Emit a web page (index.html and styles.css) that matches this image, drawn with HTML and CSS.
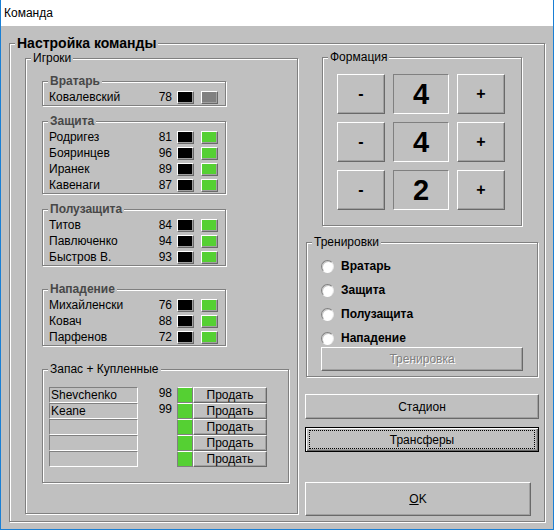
FILE: index.html
```html
<!DOCTYPE html>
<html lang="ru">
<head>
<meta charset="utf-8">
<title>Команда</title>
<link rel="stylesheet" href="styles.css">
</head>
<body>
<div class="window">
  <div class="titlebar">Команда</div>
  <div class="client">
    <div class="gb main">
      <div class="lg"><span class="main-title">Настройка команды</span></div>
      <div class="main-body">

        <div class="gb players">
          <div class="lg"><span>Игроки</span></div>
          <div class="players-body">

            <div class="gb sub">
              <div class="lg"><span class="sub-title">Вратарь</span></div>
              <div class="rows">
                <div class="row"><span class="name">Ковалевский</span><span class="num">78</span><span class="box black"></span><span class="box gray"></span></div>
              </div>
            </div>

            <div class="gb sub sp15">
              <div class="lg"><span class="sub-title">Защита</span></div>
              <div class="rows">
                <div class="row"><span class="name">Родригез</span><span class="num">81</span><span class="box black"></span><span class="box green"></span></div>
                <div class="row"><span class="name">Бояринцев</span><span class="num">96</span><span class="box black"></span><span class="box green"></span></div>
                <div class="row"><span class="name">Иранек</span><span class="num">89</span><span class="box black"></span><span class="box green"></span></div>
                <div class="row"><span class="name">Кавенаги</span><span class="num">87</span><span class="box black"></span><span class="box green"></span></div>
              </div>
            </div>

            <div class="gb sub sp15">
              <div class="lg"><span class="sub-title">Полузащита</span></div>
              <div class="rows">
                <div class="row"><span class="name">Титов</span><span class="num">84</span><span class="box black"></span><span class="box green"></span></div>
                <div class="row"><span class="name">Павлюченко</span><span class="num">94</span><span class="box black"></span><span class="box green"></span></div>
                <div class="row"><span class="name">Быстров В.</span><span class="num">93</span><span class="box black"></span><span class="box green"></span></div>
              </div>
            </div>

            <div class="gb sub sp23">
              <div class="lg"><span class="sub-title">Нападение</span></div>
              <div class="rows">
                <div class="row"><span class="name">Михайленски</span><span class="num">76</span><span class="box black"></span><span class="box green"></span></div>
                <div class="row"><span class="name">Ковач</span><span class="num">88</span><span class="box black"></span><span class="box green"></span></div>
                <div class="row"><span class="name">Парфенов</span><span class="num">72</span><span class="box black"></span><span class="box green"></span></div>
              </div>
            </div>

            <div class="gb reserve sp23">
              <div class="lg"><span>Запас + Купленные</span></div>
              <div class="reserve-body">
                <div class="rrow"><span class="field">Shevchenko</span><span class="rnum">98</span><span class="gcell"></span><span class="btn sell">Продать</span></div>
                <div class="rrow"><span class="field">Keane</span><span class="rnum">99</span><span class="gcell"></span><span class="btn sell">Продать</span></div>
                <div class="rrow"><span class="field"></span><span class="rnum"></span><span class="gcell"></span><span class="btn sell">Продать</span></div>
                <div class="rrow"><span class="field"></span><span class="rnum"></span><span class="gcell"></span><span class="btn sell">Продать</span></div>
                <div class="rrow"><span class="field"></span><span class="rnum"></span><span class="gcell"></span><span class="btn sell">Продать</span></div>
              </div>
            </div>

          </div>
        </div>

        <div class="side">
          <div class="gb formation">
            <div class="lg"><span>Формация</span></div>
            <div class="formation-body">
              <div class="btn fbtn">-</div><div class="display">4</div><div class="btn fbtn">+</div>
              <div class="btn fbtn">-</div><div class="display">4</div><div class="btn fbtn">+</div>
              <div class="btn fbtn">-</div><div class="display">2</div><div class="btn fbtn">+</div>
            </div>
          </div>

          <div class="gb training">
            <div class="lg"><span>Тренировки</span></div>
            <div class="training-body">
              <div class="radio-row"><span class="radio"></span><span class="rlabel">Вратарь</span></div>
              <div class="radio-row"><span class="radio"></span><span class="rlabel">Защита</span></div>
              <div class="radio-row"><span class="radio"></span><span class="rlabel">Полузащита</span></div>
              <div class="radio-row"><span class="radio"></span><span class="rlabel">Нападение</span></div>
              <div class="btn train-btn">Тренировка</div>
            </div>
          </div>

          <div class="btn wide stadium">Стадион</div>
          <div class="btn wide default"><span class="focus">Трансферы</span></div>
          <div class="btn ok"><span><span class="u">O</span>K</span></div>
        </div>

      </div>
    </div>
  </div>
</div>
</body>
</html>
```

FILE: styles.css
```css
* { box-sizing: border-box; }
html, body { margin: 0; padding: 0; }
body {
  width: 554px;
  height: 530px;
  overflow: hidden;
  font-family: "Liberation Sans", Arial, sans-serif;
  font-size: 12px;
  color: #000;
  background: #fff;
}
.window {
  width: 554px;
  height: 530px;
  border: 1px solid #1a7fd4;
  border-top: none;
  display: flex;
  flex-direction: column;
}
.titlebar {
  height: 26px;
  flex: none;
  background: #fff;
  padding-left: 3px;
  display: flex;
  align-items: center;
  font-size: 12px;
}
.client {
  flex: 1;
  background: #c0c0c0;
  padding: 17px 0 0 8px;
}

/* etched group box */
.gb {
  border: 1px solid #808080;
  box-shadow: inset 1px 1px 0 #fff, 1px 1px 0 #fff;
}
.lg {
  height: 0;
  display: flex;
  align-items: center;
  margin-top: -1px;
  margin-bottom: 1px;
  padding-left: 5px;
}
.lg span {
  background: #c0c0c0;
  padding: 0 2px;
  line-height: 14px;
  white-space: nowrap;
}
.lg .main-title {
  font-size: 14px;
  font-weight: bold;
  line-height: 18px;
}
.lg .sub-title {
  font-weight: bold;
  color: #484848;
}

.main {
  width: 536px;
  height: 479px;
}
.main-body {
  display: flex;
  align-items: flex-start;
  padding: 14px 0 0 15px;
}

.players {
  width: 273px;
  height: 456px;
  flex: none;
}
.players-body {
  padding: 22px 0 0 16px;
}
.sub { width: 184px; }
.sp15 { margin-top: 15px; }
.sp23 { margin-top: 23px; }
.rows {
  padding: 7px 7px 0 6px;
}
.row {
  display: flex;
  align-items: center;
  height: 16px;
}
.name { flex: 1; white-space: nowrap; }
.num { margin-right: 5px; }
.box {
  width: 17px;
  height: 13px;
  border: 1px solid;
  border-color: #fff #696969 #696969 #fff;
  box-shadow: inset -1px -1px 0 #a0a0a0;
}
.box + .box { margin-left: 7px; }
.black { background: #000; }
.gray { background: #808080; }
.green { background: #55d033; }

.reserve {
  width: 247px;
  height: 114px;
}
.reserve-body {
  padding: 17px 0 0 6px;
}
.rrow {
  display: flex;
  height: 16px;
}
.field {
  width: 89px;
  height: 16px;
  border: 1px solid;
  border-color: #808080 #fff #fff #808080;
  padding-left: 1px;
  line-height: 14px;
  white-space: nowrap;
}
.rnum {
  width: 34px;
  margin-right: 5px;
  text-align: right;
  line-height: 12px;
}
.gcell {
  width: 16px;
  height: 16px;
  background: #55d033;
  border: 1px solid;
  border-color: #fff #808080 #808080 #808080;
}

/* raised button */
.btn {
  background: #c0c0c0;
  border: 1px solid;
  border-color: #fff #696969 #696969 #fff;
  box-shadow: inset -1px -1px 0 #a0a0a0;
  display: flex;
  align-items: center;
  justify-content: center;
  white-space: nowrap;
}
.sell {
  width: 74px;
  height: 16px;
  line-height: 14px;
}

.side {
  width: 234px;
  flex: none;
  margin-left: 7px;
  margin-top: -1px;
  display: flex;
  flex-direction: column;
}
.formation {
  width: 200px;
  height: 169px;
  margin-left: 17px;
}
.formation-body {
  padding: 16px 0 0 14px;
  display: grid;
  grid-template-columns: 48px 56px 48px;
  grid-auto-rows: 40px;
  gap: 8px;
}
.fbtn {
  font-size: 16px;
  font-weight: bold;
}
.display {
  border: 1px solid;
  border-color: #808080 #fff #fff #808080;
  display: flex;
  align-items: center;
  justify-content: center;
  font-size: 29px;
  font-weight: bold;
}

.training {
  width: 232px;
  height: 135px;
  margin-left: 1px;
  margin-top: 16px;
}
.training-body {
  padding: 11px 14px 0 14px;
}
.radio-row {
  height: 24px;
  display: flex;
  align-items: center;
}
.radio {
  width: 13px;
  height: 13px;
  border-radius: 50%;
  background: #fff;
  border: 1px solid;
  border-color: #808080 #e8e8e8 #fff #808080;
  box-shadow: inset 1px 1px 0 #c8c8c8;
  margin-right: 7px;
}
.rlabel { font-weight: bold; }
.train-btn {
  margin-top: -3px;
  height: 24px;
  color: #808080;
  text-shadow: 1px 1px 0 #fff;
}

.wide { height: 25px; }
.stadium { margin-top: 17px; }
.default {
  margin-top: 8px;
  border-color: #000;
  box-shadow: inset 1px 1px 0 #fff, inset -1px -1px 0 #696969, inset -2px -2px 0 #a0a0a0;
  padding: 2px 3px;
  align-items: stretch;
}
.focus {
  flex: 1;
  border: 1px dotted #000;
  display: flex;
  align-items: center;
  justify-content: center;
}
.ok {
  width: 226px;
  height: 34px;
  margin-top: 30px;
}
.u { text-decoration: underline; }
```
